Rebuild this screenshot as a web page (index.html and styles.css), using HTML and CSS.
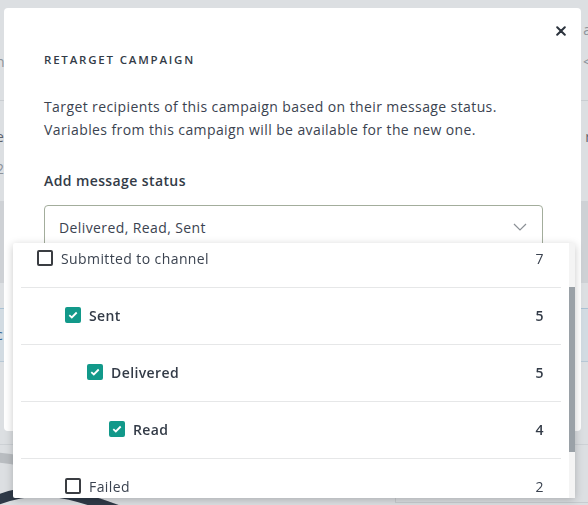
FILE: index.html
```html
<!DOCTYPE html>
<html lang="en">
<head>
<meta charset="utf-8">
<title>Retarget campaign</title>
<link rel="stylesheet" href="styles.css">
</head>
<body>
<div class="page">
  <div class="bg-top">
    <div class="bg-line"><span class="frag-l"></span><span class="frag-r">a</span></div>
    <div class="bg-line"><span class="frag-l">n</span><span class="frag-r">&lt;</span></div>
  </div>
  <div class="bg-mid">
    <div class="bg-line"><span class="frag-l dark">e,</span><span class="frag-r dark">r</span></div>
    <div class="bg-line"><span class="frag-l">2</span><span class="frag-r"></span></div>
  </div>
  <div class="bg-band"></div>
  <div class="bg-gap"></div>
  <div class="bg-blue"><span class="frag-l blue">c</span></div>
  <div class="bg-rest"></div>
  <div class="bg-bottom">
    <div class="bg-chart">
      <svg width="395" height="60" viewBox="0 0 395 60">
        <path d="M-10 12 Q 40 14 70 40 T 150 70" fill="none" stroke="#b9bdc1" stroke-width="10"/>
        <path d="M-10 58 Q 30 40 70 50 T 140 75" fill="none" stroke="#2f3a48" stroke-width="10"/>
      </svg>
    </div>
    <div class="bg-cell"></div>
  </div>
</div>

<div class="modal">
  <button class="close" aria-label="Close">
    <svg width="10" height="10" viewBox="0 0 10 10"><path d="M1.2 1.2 L8.8 8.8 M8.8 1.2 L1.2 8.8" stroke="#2c333d" stroke-width="2" stroke-linecap="round"/></svg>
  </button>
  <h2 class="title">RETARGET CAMPAIGN</h2>
  <p class="desc">Target recipients of this campaign based on their message status.<br>Variables from this campaign will be available for the new one.</p>
  <div class="label">Add message status</div>
  <div class="select">
    <span>Delivered, Read, Sent</span>
    <svg width="14" height="8" viewBox="0 0 14 8"><path d="M1 1 L7 7 L13 1" fill="none" stroke="#8b9096" stroke-width="1.2"/></svg>
  </div>

  <div class="dropdown">
    <div class="list-wrap">
      <ul class="list">
        <li class="row lvl0">
          <span class="box"></span><span class="name">Submitted to channel</span><span class="count">7</span>
        </li>
        <li class="row lvl1 on">
          <span class="box"><svg width="10" height="8" viewBox="0 0 10 8"><path d="M1.3 4.2 L3.8 6.5 L8.7 1.5" fill="none" stroke="#fff" stroke-width="1.8"/></svg></span><span class="name">Sent</span><span class="count">5</span>
        </li>
        <li class="row lvl2 on">
          <span class="box"><svg width="10" height="8" viewBox="0 0 10 8"><path d="M1.3 4.2 L3.8 6.5 L8.7 1.5" fill="none" stroke="#fff" stroke-width="1.8"/></svg></span><span class="name">Delivered</span><span class="count">5</span>
        </li>
        <li class="row lvl3 on">
          <span class="box"><svg width="10" height="8" viewBox="0 0 10 8"><path d="M1.3 4.2 L3.8 6.5 L8.7 1.5" fill="none" stroke="#fff" stroke-width="1.8"/></svg></span><span class="name">Read</span><span class="count">4</span>
        </li>
        <li class="row lvl1">
          <span class="box"></span><span class="name">Failed</span><span class="count">2</span>
        </li>
      </ul>
    </div>
    <div class="scrollbar"><div class="thumb"></div></div>
  </div>
</div>
</body>
</html>
```
FILE: styles.css
```css
* { box-sizing: border-box; }
html, body { margin: 0; padding: 0; }
body {
  width: 588px;
  height: 505px;
  overflow: hidden;
  background: #dcdfe2;
  font-family: "Open Sans", "Liberation Sans", sans-serif;
  color: #3b4350;
}

/* background page (under the overlay) */
.page { width: 588px; height: 505px; display: flex; flex-direction: column; }
.bg-top { height: 103px; border-bottom: 1px solid #c9cdd1; padding-top: 20px; }
.bg-mid { height: 102px; padding-top: 26px; }
.bg-line { display: flex; justify-content: space-between; height: 32px; font-size: 14px; color: #8d939a; }
.frag-l { margin-left: -4px; }
.frag-r { margin-right: -3px; }
.dark { color: #5c636c; }
.blue { color: #3b6b9a; line-height: 52px; display: inline-block; }
.bg-band { height: 85px; background: #ced1d5; }
.bg-gap { height: 25px; }
.bg-blue { height: 56px; background: #d2dbe2; border-top: 1px solid #a9c1d3; border-bottom: 1px solid #b7c8d6; font-size: 14px; }
.bg-rest { height: 84px; }
.bg-bottom { flex: 1; display: flex; border-top: 1px solid #cdd1d5; }
.bg-chart { width: 395px; overflow: hidden; }
.bg-chart svg { display: block; }
.bg-cell { flex: 1; border-left: 1px solid #c8ccd0; border-bottom: 1px solid #c8ccd0; margin-bottom: 2px; }

/* modal */
.modal {
  position: fixed;
  left: 4px;
  top: 8px;
  width: 577px;
  height: 423px;
  background: #fff;
  border-radius: 4px;
  padding: 44px 38px 0 40px;
  letter-spacing: 0.4px;
}
.close {
  position: absolute;
  right: 14px;
  top: 17px;
  width: 12px;
  height: 12px;
  padding: 0;
  border: 0;
  background: none;
  display: flex;
  align-items: center;
  justify-content: center;
}
.title {
  margin: 0;
  font-size: 11.5px;
  line-height: 16px;
  font-weight: 600;
  letter-spacing: 1.8px;
  color: #333b47;
}
.desc {
  margin: 27px 0 0;
  font-size: 14px;
  line-height: 23px;
  color: #3b4350;
}
.label {
  margin-top: 30px;
  font-size: 14px;
  line-height: 20px;
  font-weight: 600;
  color: #333b47;
}
.select {
  margin-top: 14px;
  height: 44px;
  border: 1px solid #a3ad9c;
  border-radius: 4px;
  display: flex;
  align-items: center;
  justify-content: space-between;
  padding: 0 15px 0 14px;
  font-size: 14px;
  color: #3b4350;
}
.select svg { display: block; }

/* dropdown */
.dropdown {
  position: absolute;
  left: 9px;
  top: 235px;
  width: 562px;
  height: 255px;
  background: #fff;
  box-shadow: 0 2px 8px rgba(0, 0, 0, 0.22);
  display: flex;
  border-radius: 2px;
}
.list-wrap { flex: 1; overflow: hidden; }
.list { list-style: none; margin: -12px 0 0; padding: 0 8px; }
.row {
  height: 57px;
  border-bottom: 1px solid #e6e7e8;
  display: flex;
  align-items: center;
  padding-right: 17px;
  padding-bottom: 2px;
  font-size: 14px;
  color: #3b4350;
}
.lvl0 { padding-left: 16px; }
.lvl1 { padding-left: 44px; }
.lvl2 { padding-left: 66px; }
.lvl3 { padding-left: 88px; }
.box {
  width: 16px;
  height: 16px;
  border: 2px solid #3a3d42;
  border-radius: 2px;
  flex: none;
  display: flex;
  align-items: center;
  justify-content: center;
}
.on .box { background: #12998a; border-color: #12998a; }
.box svg { display: block; }
.name { margin-left: 8px; flex: 1; }
.on .name, .on .count { font-weight: 600; color: #333b47; }
.count { text-align: right; }
.scrollbar { width: 6px; background: #f4f4f4; padding-top: 44px; }
.thumb { height: 165px; background: #9aa1a7; }
```
